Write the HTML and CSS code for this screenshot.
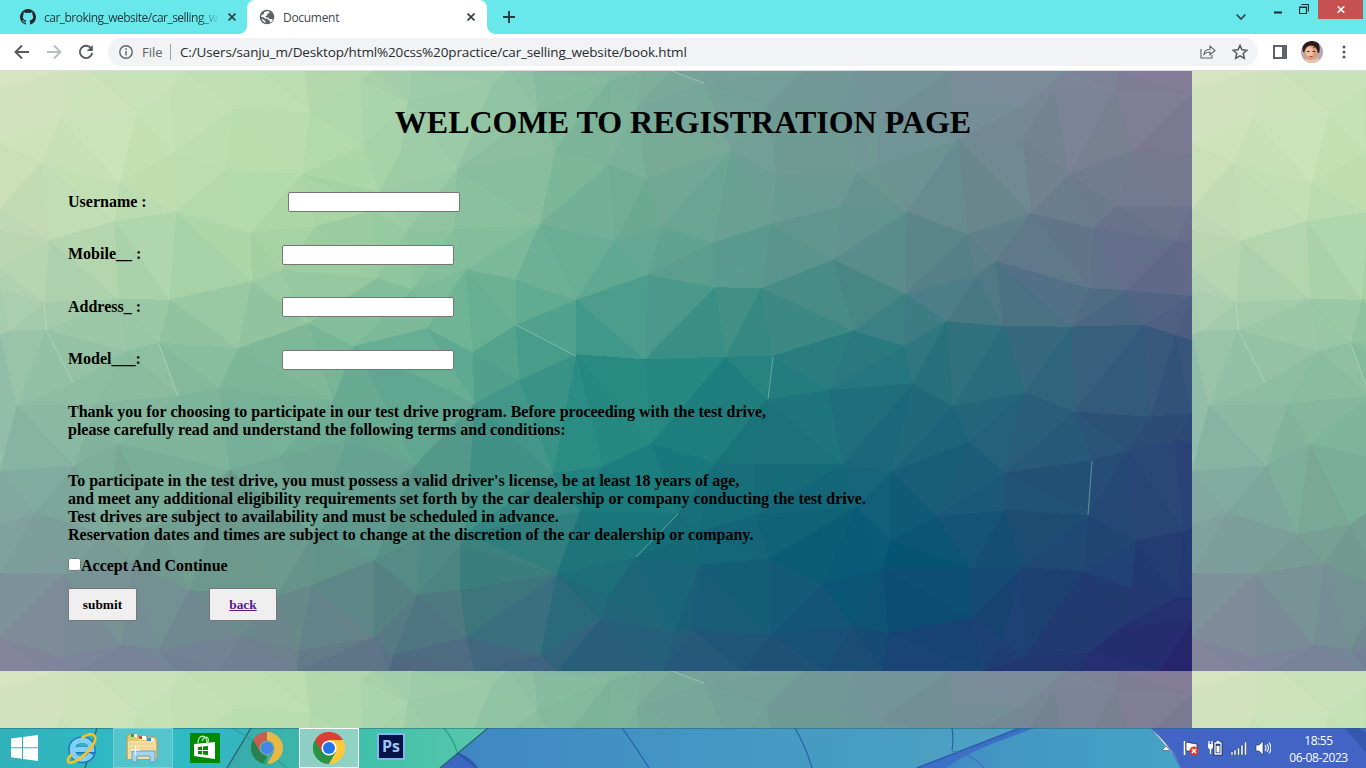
FILE: index.html
```
<!DOCTYPE html>
<html lang="en">
<head>
<meta charset="utf-8">
<title>Document</title>
<link rel="stylesheet" href="styles.css">
</head>
<body>
<header class="tabs">
  <div class="tab tab-idle">
    <svg class="fav" viewBox="0 0 16 16"><path fill="#24292f" d="M8 0a8 8 0 0 0-2.5 15.6c.4.1.5-.2.5-.4v-1.5c-2.2.5-2.7-.9-2.7-.9-.4-.9-.9-1.200-.9-1.200-.7-.5.1-.5.1-.5.8.1 1.200.8 1.200.8.7 1.300 1.900.9 2.300.7.1-.5.3-.9.5-1.100-1.800-.2-3.600-.9-3.600-4 0-.9.300-1.600.8-2.100-.1-.2-.4-1 .1-2.100 0 0 .7-.2 2.200.8a7.600 7.600 0 0 1 4 0c1.500-1 2.200-.8 2.200-.8.4 1.100.2 1.900.1 2.100.5.6.8 1.300.8 2.100 0 3.100-1.900 3.800-3.700 4 .3.300.6.8.6 1.500v2.200c0 .2.1.5.5.4A8 8 0 0 0 8 0z"/></svg>
    <span class="tab-title fade">car_broking_website/car_selling_w</span>
    <svg class="close" viewBox="0 0 8 8"><path d="M.5.5l7 7M7.500.5l-7 7"/></svg>
  </div>
  <div class="tab tab-active">
    <svg class="fav globe" viewBox="0 0 16 16"><circle cx="8" cy="8" r="7.300" fill="#5f6368"/><path fill="#fff" d="M9 2.200l1.500.4-.3 1.600-1.700.5-.3 1.600-1.700.9.300 1.200h2.600l1 1.500 2.500.2 1 .9c-.6 1.300-1.500 2.200-2.700 2.800l-.5-2-1.600-1-.2-1-2.700-.1-1.500-1.400-2.500-.3c0-.9.200-1.800.6-2.500l1.400.3.8-1.300L5.300 3C6.400 2.300 7.700 2 9 2.200zM2.500 10l2 .4 1.600 1.700.6 1.600C4.700 13.200 3.200 11.900 2.500 10z"/></svg>
    <span class="tab-title">Document</span>
    <svg class="close" viewBox="0 0 8 8"><path d="M.5.5l7 7M7.500.5l-7 7"/></svg>
  </div>
  <svg class="plus" viewBox="0 0 12 12"><path d="M6 0v12M0 6h12"/></svg>
  <svg class="search-tabs" viewBox="0 0 10 6"><path d="M.7.7L5 5 9.300.7"/></svg>
  <div class="win">
    <svg class="min" viewBox="0 0 8 3"><path d="M0 1.500h8"/></svg>
    <svg class="restore" viewBox="0 0 10 10"><path d="M.5 3h7v6.500h-7zM.5 3.500h7M2.500.5h7v7"/></svg>
    <span class="win-close"><svg viewBox="0 0 8 7"><path d="M.7.3l6.600 6.400M7.300.3L.7 6.700"/></svg></span>
  </div>
</header>
<nav class="toolbar">
  <svg class="nav-i" viewBox="0 0 16 16"><path d="M15 8H2M8 1.500L1.500 8 8 14.500"/></svg>
  <svg class="nav-i dim" viewBox="0 0 16 16"><path d="M1 8h13M8 1.500L14.500 8 8 14.500"/></svg>
  <svg class="nav-i" viewBox="0 0 16 16"><path d="M13.300 4.500A6.200 6.200 0 1 0 14.200 9"/><path class="solid" d="M14.800 1v6h-6z"/></svg>
  <div class="omni">
    <svg class="info" viewBox="0 0 14 14"><circle cx="7" cy="7" r="6.200"/><path d="M7 6v4.500M7 3.300V5"/></svg>
    <span class="scheme">File</span><i class="sep"></i>
    <span class="url">C:/Users/sanju_m/Desktop/html%20css%20practice/car_selling_website/book.html</span>
    <svg class="share" viewBox="0 0 16 14"><path d="M1 4v9h11v-3M4 9.500c.3-3.300 2.300-5 6-5.200V1.200L15 5.500l-5 4.200V7c-2.800 0-4.500.8-6 2.500z"/></svg>
    <svg class="star" viewBox="0 0 14 14"><path d="M7 1.200l1.700 3.900 4.300.4-3.200 2.800 1 4.200L7 10.300l-3.800 2.200 1-4.200L1 5.500l4.300-.4z"/></svg>
  </div>
  <svg class="panel" viewBox="0 0 14 14"><path fill="#5f6368" fill-rule="evenodd" d="M0 0h14v14H0zM2 2v10h7V2z"/></svg>
  <svg class="avatar" viewBox="0 0 22 22">
    <defs><clipPath id="round"><circle cx="11" cy="11" r="11"/></clipPath></defs>
    <g clip-path="url(#round)"><path fill="#b8a7b8" d="M0 0h22v22H0z"/><path fill="#2c1b1c" d="M2 11C0 5 4 0 11 0s9 5 7 12z"/><ellipse cx="10" cy="12" rx="6.800" ry="7.500" fill="#d99c7c"/><ellipse cx="8.500" cy="11" rx="4" ry="5" fill="#ecc0a2"/><path fill="#2c1b1c" d="M3 9c1-3 3-5 6-5s8 2 9 7V3L11 0 4 2z"/><path fill="#e8c5aa" d="M4 18l6 1 7-2 4 5H1z"/><path stroke="#402020" d="M6 10.500h2.500M11.500 10.500H14"/><path stroke="#a84545" d="M8.500 15.500h3"/><circle cx="13" cy="6.500" r=".8" fill="#a22"/></g>
  </svg>
  <svg class="kebab" viewBox="0 0 4 14"><circle cx="2" cy="2" r="1.500"/><circle cx="2" cy="7" r="1.500"/><circle cx="2" cy="12" r="1.500"/></svg>
</nav>
<main class="page">
  <svg class="mesh" viewBox="0 0 1366 657"><g id="tile"></g><use href="#tile" x="1192"/><use href="#tile" y="600"/><use href="#tile" x="1192" y="600"/></svg>
  <div class="content">
    <h1>WELCOME TO REGISTRATION PAGE</h1>
    <form class="form">
      <label class="row first"><span>Username :</span><input type="text"></label>
      <label class="row"><span>Mobile__ :</span><input type="text"></label>
      <label class="row"><span>Address_ :</span><input type="text"></label>
      <label class="row"><span>Model___:</span><input type="text"></label>
      <p class="intro">Thank you for choosing to participate in our test drive program. Before proceeding with the test drive,<br>please carefully read and understand the following terms and conditions:</p>
      <p class="terms">To participate in the test drive, you must possess a valid driver's license, be at least 18 years of age,<br>and meet any additional eligibility requirements set forth by the car dealership or company conducting the test drive.<br>Test drives are subject to availability and must be scheduled in advance.<br>Reservation dates and times are subject to change at the discretion of the car dealership or company.</p>
      <label class="accept"><input type="checkbox"><span>Accept And Continue</span></label>
      <div class="actions"><button type="button">submit</button><button type="button" class="back"><a href="#">back</a></button></div>
    </form>
  </div>
</main>
<footer class="taskbar">
  <svg class="wall" viewBox="0 0 1366 40" preserveAspectRatio="none">
    <defs>
      <linearGradient id="w1"><stop offset="0" stop-color="#31b1ba"/><stop offset=".6" stop-color="#2fbcc6"/><stop offset="1" stop-color="#35b3bd"/></linearGradient>
      <linearGradient id="w2"><stop offset="0" stop-color="#38a9ac"/><stop offset=".5" stop-color="#3fc0aa"/><stop offset="1" stop-color="#58c7aa"/></linearGradient>
      <linearGradient id="w3"><stop offset="0" stop-color="#3f86c5"/><stop offset=".5" stop-color="#4498c3"/><stop offset="1" stop-color="#4da2c3"/></linearGradient>
      <linearGradient id="w4"><stop offset="0" stop-color="#3c80c7"/><stop offset=".3" stop-color="#4496c3"/><stop offset="1" stop-color="#45a4c5"/></linearGradient>
    </defs>
    <path fill="url(#w1)" d="M0 0h260v40H0z"/><path fill="url(#w2)" d="M250 0h238l-48 40H227z"/>
    <path fill="url(#w3)" d="M488 0h530l-100 40H440z"/><path fill="#3b66c2" d="M458 25l-18 15h38c-3-6-9-12-20-15z"/>
    <path fill="url(#w4)" d="M1018 0h133l34 40H918z"/><path fill="#3a70c5" d="M1034 0h-16L916 40h30c20-15 40-22 88-40z"/>
    <path fill="#4164c5" d="M1151 0h215v40h-185c-5-15-15-26-30-40z"/><path fill="#3557ae" d="M1345 0l21 25V5l-8-5z"/>
    <g fill="none" stroke="#2860ab" stroke-width="1.200"><path d="M622 0c10 14 18 26 27 40M795 0c8 14 13 26 17 40M952 0c1.500 10 1.500 14 0 22"/><path stroke="#2b5a9a" stroke-width="2.200" d="M457 25c9 5 15 10 20 15"/><path stroke="#2a6472" stroke-width="1.300" d="M97 0L85 40M251 0l-24 40M488 0l-48 40"/><path stroke="#2a9e94" d="M232 0c20 10 35 24 55 40M444 0q10 12 13 24"/><path stroke="#2f5fae" stroke-width="1.600" d="M1020 0L917 40"/><path stroke="#5267bd" d="M952 23q22 4 32 17M1151 0q18 14 30 40"/></g>
    <path stroke="#24616d" stroke-opacity=".5" d="M0 .5h1366"/>
  </svg>
  <div class="apps">
    <span class="app start"><svg viewBox="0 0 27 26"><path fill="#fff" d="M0 3.500L11 2v10.300H0zM12 1.900L27 0v12.300H12zM0 13.300h11v10.500L0 22.300zM12 13.300h15V26l-15-2z"/></svg></span>
    <span class="app ie"><svg viewBox="0 0 32 32"><path fill="none" stroke="#1d74b8" stroke-width="7.400" d="M27 21c-2 4.500-5.500 6.500-10 6.500-6 0-11-4.500-11-10.500S11 7 17 7s9.500 4.500 10 10.500H9"/><path fill="none" stroke="#7fd0f4" stroke-width="5.400" d="M26 21.500c-2 4-5 5.500-9 5.500-6 0-10.500-4-10.500-10S11 7.500 17 7.500s9 4 9.500 9.500H9"/><path fill="none" stroke="#f4c32b" stroke-width="2.800" d="M6 22C-1 29 2 33 10 29 21 23 34 8 29 2.500 27 .5 22 1.500 16 5"/></svg></span>
    <span class="app frame"><svg viewBox="0 0 34 30"><path fill="#e4c873" stroke="#b49b55" d="M1 4l2-3h7l2 3h18l1 3v19H1z"/><path fill="#fff" d="M5 1h6v3H5zM13 3h7v4h-7zM21 5h7v3h-7z"/><path fill="#2aa43b" d="M5 1h3v3H5z"/><path fill="#dc4931" d="M13 3h3v3h-3z"/><path fill="#4589ce" d="M21 5h4v3h-4z"/><path fill="#f3dda0" d="M2 8h28v18H2z"/><path stroke="#e3cb87" stroke-width=".7" d="M3 11h26M3 15h26M3 19h26"/><path fill="#a6d4ec" stroke="#679dc3" d="M6 29V18h23v11h-5v-6H11v6z"/><path stroke="#fff" d="M5 17h9M9.500 12v10"/></svg></span>
    <span class="app store"><svg viewBox="0 0 30 30"><path fill="#008a00" d="M0 0h30v30H0z"/><path fill="none" stroke="#b9e5b9" stroke-width="1.300" d="M8 10c0-9 9-9 9 0M12 8c3-7 8-3 6 1"/><path fill="#fff" d="M4 11l21-2v17L4 23z"/><path fill="#008a00" d="M8 14l4-.4V17H8zM13 13.500l5-.5v4h-5zM8 18h4v3.500L8 21zM13 18h5v4l-5-.4z"/></svg></span>
    <span class="app"><svg class="chrome" viewBox="0 0 32 32"><path fill="#34a35c" d="M16 16L2.100 8A16 16 0 0 0 16 32z"/><path fill="#c95e4e" d="M2.100 8A16 16 0 0 1 16 0v8l-7 12z"/><path fill="#e8b943" d="M16 0A16 16 0 0 1 16 32l7-12-7-12z"/><path fill="#278251" d="M2.100 8L9 20l7 4-4 7.500A16 16 0 0 1 2.100 8z"/><circle cx="16" cy="16" r="7.600" fill="#73a5a0"/><circle cx="16" cy="16" r="6" fill="#4287e6"/></svg></span>
    <span class="app frame current"><svg class="chrome" viewBox="0 0 32 32"><path fill="#299247" d="M16 16L2.100 8A16 16 0 0 0 16 32l7-12z"/><path fill="#dc3f32" d="M2.100 8A16 16 0 0 1 29.900 8H16l-7 12z"/><path fill="#fcc934" d="M29.900 8A16 16 0 0 1 16 32l7-12-7-12z"/><circle cx="16" cy="16" r="7.600" fill="#fff"/><circle cx="16" cy="16" r="6" fill="#2374e8"/></svg></span>
    <span class="app ps"><b>Ps</b></span>
  </div>
  <div class="tray">
    <svg class="t-up" viewBox="0 0 8 5"><path fill="#fff" stroke="#234" stroke-width=".5" d="M0 4.500L4 0l4 4.500z"/></svg>
    <svg class="t-flag" viewBox="0 0 16 16"><path stroke="#fff" stroke-width="1.500" d="M1.500 1v14"/><path fill="#fff" stroke="#123" stroke-width=".7" d="M3 2l5 1 6 1v7H3z"/><circle cx="11" cy="11" r="4.500" fill="#df3d2c"/><path stroke="#fff" stroke-width="1.500" d="M9 9l4 4M13 9l-4 4"/></svg>
    <svg class="t-bat" viewBox="0 0 16 16"><path fill="none" stroke="#142b55" stroke-width="3" d="M8 3h6v11H8z"/><path fill="none" stroke="#fff" stroke-width="1.300" d="M8 3h6v11H8zM9.500 1.700h3M2 1v4M5 1v4M3.500 7v7"/><path fill="#fff" d="M1 4h5v3L5 9H2L1 7zM9.500 6h3v6.500h-3z"/></svg>
    <svg class="t-sig" viewBox="0 0 16 13"><g fill="#fff" stroke="#142b55" stroke-width=".4"><path d="M0 10h2v3H0zM3 8h2v5H3zM6.500 6h2v7h-2zM10 3h2v10h-2zM13.500 0h2v13h-2z"/></g></svg>
    <svg class="t-vol" viewBox="0 0 16 16"><path fill="#fff" stroke="#142b55" stroke-width=".6" d="M1 5h3l4-4v14l-4-4H1z"/><path fill="none" stroke="#e9f0ff" stroke-width="1.200" d="M10 5q2 3 0 6M12 4q3 4 0 8M14 2.500q4 5.500 0 11"/></svg>
    <div class="clock"><span>18:55</span><span>06-08-2023</span></div>
  </div>
</footer>
<script src="mesh.js"></script>
</body>
</html>
```
FILE: styles.css
```
* { box-sizing: border-box; }
body { margin: 0; width: 1366px; height: 768px; overflow: hidden; display: flex; flex-direction: column; font-family: "Open Sans", "Noto Sans", sans-serif; }
svg { display: block; flex: none; }
.tabs { height: 34px; background: #69e8ec; display: flex; align-items: center; }
.tab { display: flex; align-items: center; height: 34px; font-size: 12px; color: #24383c; }
.tab-idle { width: 247px; padding-left: 20px; }
.tab-active { position: relative; width: 240px; padding-left: 12px; background: #fff; border-radius: 8px 8px 0 0; color: #45484c; }
.tab-active::before, .tab-active::after { content: ""; position: absolute; bottom: 0; width: 8px; height: 8px; }
.tab-active::before { left: -8px; background: radial-gradient(circle at 0 0, transparent 7.500px, #fff 8px); }
.tab-active::after { right: -8px; background: radial-gradient(circle at 100% 0, transparent 7.500px, #fff 8px); }
.fav { width: 16px; height: 16px; margin-right: 8px; }
.tab-title { width: 176px; white-space: nowrap; }
.fade { letter-spacing: -.52px; -webkit-mask-image: linear-gradient(90deg, #000 154px, transparent 176px); }
.tab-active .tab-title { width: 184px; letter-spacing: -.3px; }
.close { width: 8px; height: 8px; margin-left: 8px; fill: none; stroke: #303b3e; stroke-width: 1.600; }
.tab-active .close { margin-left: 0; }
.plus { width: 12px; height: 12px; margin-left: 16px; stroke: #253c40; stroke-width: 1.900; }
.search-tabs { width: 10px; height: 6px; margin-left: 721px; fill: none; stroke: #28474a; stroke-width: 1.700; }
.win { display: flex; height: 34px; margin-left: 28px; flex: 1; }
.win svg { fill: none; stroke: #20282a; }
.min { width: 8px; height: 3px; margin-top: 11px; stroke-width: 2; }
.restore { width: 10px; height: 10px; margin: 4px 9px 0 17px; stroke-width: 1.200; }
.win-close { width: 45px; height: 19px; background: #c75050; display: flex; align-items: center; justify-content: center; }
.win-close svg { width: 8px; height: 7px; stroke: #fff; stroke-width: 1.600; }
.toolbar { height: 37px; background: #fff; border-bottom: 1px solid #dadce0; display: flex; align-items: center; padding-left: 14px; }
.nav-i { width: 16px; height: 16px; margin-right: 16px; fill: none; stroke: #55585d; stroke-width: 1.900; }
.nav-i .solid { fill: #55585d; stroke: none; }
.dim { stroke: #babcbe; }
.omni { width: 1150px; height: 28px; margin-left: -2px; border-radius: 14px; background: #f1f3f4; display: flex; align-items: center; padding-left: 11px; font-size: 14px; color: #292c30; }
.info { width: 14px; height: 14px; fill: none; stroke: #5f6368; stroke-width: 1.400; }
.scheme { width: 28px; margin-left: 9px; color: #5f6368; font-size: 13px; }
.sep { width: 1px; height: 16px; background: #9da0a4; }
.url { width: 1020px; margin-left: 9px; font-size: 13.500px; letter-spacing: -.14px; white-space: nowrap; }
.share { width: 16px; height: 14px; fill: none; stroke: #5f6368; stroke-width: 1.100; }
.star { width: 16px; height: 16px; margin-left: 16px; fill: none; stroke: #55585d; stroke-width: 1.300; }
.panel { width: 14px; height: 14px; margin-left: 15px; }
.avatar { width: 22px; height: 22px; margin-left: 14px; }
.kebab { width: 4px; height: 14px; margin-left: 19px; fill: #55585d; }
.page { position: relative; height: 657px; overflow: hidden; background: #70a898; font-family: "Liberation Serif", serif; font-weight: bold; color: #000; }
.mesh { position: absolute; inset: 0; width: 1366px; height: 657px; }
.content { position: relative; padding-top: 33px; }
h1 { margin: 0; height: 37px; font-size: 32px; line-height: 37px; text-align: center; }
.form { padding: 34.300px 0 0 68px; font-size: 16px; line-height: 18px; }
.row { display: flex; align-items: center; height: 52.600px; }
.row span { width: 214px; }
.row.first span { width: 220px; }
.row input { width: 172px; height: 20px; margin: 1px 0 0; padding: 0; background: #fff; border: 1px solid #767676; border-radius: 2px; }
p { margin: 0; }
.intro { padding-top: 17.700px; }
.terms { padding-top: 33px; }
.accept { display: flex; height: 18px; margin-top: 13px; }
.accept input { width: 13px; height: 13px; margin: 1px 0 0; }
.actions { display: flex; gap: 72px; margin-top: 13px; }
button { width: 69px; height: 33px; padding: 0; border: 1px solid #767676; border-radius: 2px; background: #efefef; color: #000; font: bold 13.330px "Liberation Serif", serif; }
.back { width: 68px; }
.back a { color: #551a8b; }
.taskbar { position: relative; height: 40px; display: flex; justify-content: space-between; overflow: hidden; }
.wall { position: absolute; inset: 0; width: 1366px; height: 40px; }
.apps { position: relative; display: flex; align-items: center; }
.app { width: 62px; height: 40px; display: flex; align-items: center; justify-content: center; }
.start { width: 50px; }
.start svg { width: 27px; height: 26px; margin-left: -1px; }
.ie svg { width: 31px; height: 31px; }
.frame { width: 60px; border: 1px solid #7ccdd5; background: rgba(145, 212, 217, .38); margin-left: 1px; }
.frame svg { width: 34px; height: 30px; }
.store { padding-left: 2px; }
.store svg { width: 30px; height: 30px; }
.app .chrome { width: 32px; height: 32px; }
.store + .app { padding-left: 2px; }
.current { margin-left: 2px; border-color: #fff; background: rgba(218, 229, 219, .52); }
.ps b { width: 28px; height: 27px; margin: -3px 0 0 2px; border: 2px solid #83b6ef; background: #071348; color: #9ec5f4; font-size: 16px; line-height: 22px; text-align: center; }
.tray { position: relative; display: flex; align-items: center; color: #fff; }
.t-up { width: 8px; height: 5px; margin-right: 13px; }
.t-flag, .t-bat, .t-sig, .t-vol { width: 16px; height: 16px; margin-right: 8px; }
.t-sig { height: 13px; }
.clock { width: 95px; display: flex; flex-direction: column; align-items: center; font-size: 12px; line-height: 17px; letter-spacing: -.4px; padding-top: 1px; margin-left: -8px; }
```
FILE: mesh.js
```
// Low-poly backdrop: vertices per quadrant, in that quadrant's own units.
const quads = [
  { sx: 2.613, oy: -1, ox: 0, p: "0,3 0,55 155,3 235,3 158,145 357,128 445,50 480,3 345,3 687,3 606,117 795,3 810,127 942,30 975,3 0,218 107,277 313,339 452,250 590,299 790,311 948,225 1047,245 1065,95 1077,3 1288,37 1325,3 1405,120 1392,3 1195,299 1452,238 990,365 460,426 300,453 130,510 0,415 0,481 0,595 655,487 827,468 975,422 1062,482 1185,478 1410,463 115,696 0,657 308,687 443,689 658,634 733,602 985,624 1078,658 1217,598 1347,628 1505,690 805,760 120,780 28,783 0,792 330,842 415,818 622,835 925,828 1115,775 1235,847 1347,765 1506,853" },
  { sx: 2.047, oy: -1, ox: 600, p: "20,30 85,3 148,3 212,38 75,113 268,240 95,326 18,283 342,110 415,3 490,110 525,3 570,150 360,315 525,309 567,290 733,207 720,120 715,3 865,207 870,105 930,60 955,3 1055,62 1062,3 1212,3 1212,73 1093,240 1212,250 960,312 1057,408 882,430 628,425 495,407 350,462 232,518 127,470 30,512 98,614 235,652 330,654 478,569 752,492 810,573 770,618 625,672 1010,474 1178,514 1212,410 1212,510 1002,655 1078,661 1212,678 518,782 622,827 710,754 825,768 965,770 1113,764 1178,795 1212,810 353,858 257,860 92,868" },
  { sx: 2.613, oy: 299, ox: 0, p: "190,40 43,108 250,100 465,77 572,55 195,287 308,220 0,302 92,427 0,465 275,492 415,463 730,260 600,300 870,90 905,210 1085,285 1357,30 1240,100 1445,310 1515,425 1215,490 1100,500 0,608 166,612 345,578 820,490 978,570 815,645 720,680 495,660 1203,525 1090,672 1203,660 1455,612 166,862 0,804 318,825 415,838 630,798 780,842 978,802 1028,855 1218,802 1412,858 1568,750 0,903 120,903 205,903 455,903 570,903 775,903 1018,903 1240,903 1455,903" },
  { sx: 2.047, oy: 299, ox: 600, p: "340,88 467,60 640,40 723,108 870,67 970,125 1127,140 1212,130 105,220 5,290 235,280 318,282 497,283 597,305 755,215 827,308 1080,240 1175,213 1212,216 1008,270 1000,435 828,421 688,440 595,510 525,410 318,435 160,432 200,485 75,562 203,585 345,565 455,643 578,594 762,594 866,591 990,604 1097,512 1195,483 1212,473 1178,683 1087,655 1212,685 1070,768 1212,752 1003,847 825,807 762,744 590,788 515,768 350,795 190,780 152,788 5,745 15,680 130,903 290,903 462,903 578,903 785,903 868,865 983,903 1145,903 1212,903" }
];
const pts = quads.flatMap(q => q.p.split(" ").map(s => {
  const [x, y] = s.split(",").map(Number);
  return [Math.min(1192, q.ox + x / q.sx), y / 3 + q.oy];
}));
const n = pts.length;
pts.push([-9000, -8000], [9500, -7500], [400, 12000]);

function circle(t) {
  const [[ax, ay], [bx, by], [cx, cy]] = t.map(i => pts[i]);
  const d = 2 * (ax * (by - cy) + bx * (cy - ay) + cx * (ay - by));
  const a = ax * ax + ay * ay, b = bx * bx + by * by, c = cx * cx + cy * cy;
  const x = (a * (by - cy) + b * (cy - ay) + c * (ay - by)) / d;
  const y = (a * (cx - bx) + b * (ax - cx) + c * (bx - ax)) / d;
  return { t, x, y, r: (ax - x) ** 2 + (ay - y) ** 2 };
}
let tris = [circle([n, n + 1, n + 2])];
for (let i = 0; i < n; i++) {
  const edges = new Map();
  tris = tris.filter(c => {
    if ((pts[i][0] - c.x) ** 2 + (pts[i][1] - c.y) ** 2 >= c.r - 1e-6) return true;
    for (let k = 0; k < 3; k++) {
      const e = [c.t[k], c.t[(k + 1) % 3]].sort((u, v) => u - v), key = e.join();
      edges.has(key) ? edges.delete(key) : edges.set(key, e);
    }
    return false;
  });
  edges.forEach(e => tris.push(circle([...e, i])));
}

// Colour field: nine columns by seven rows across the 1192 x 600 tile.
const field = [
  "d9e4c4 c8e2b9 bcddb1 9ccba9 82b79e 769f99 75939a 7c8899 867a98",
  "cde1ba c3e1b3 b4dcaa 99c9a4 79b498 6fa194 6d9592 70838f 787890",
  "b6d5b1 a9d2aa a2cfa2 82bf9b 62a992 57998d 538888 5b7588 626688",
  "98c3aa 8abd9f 78b597 5ea890 2e9084 24837f 24747c 2d667b 365279",
  "86aea2 7ab099 70aa96 55988a 1c8480 176f79 17637a 245676 2b4276",
  "7d999b 73978f 669389 4a847f 1c7179 115f77 015575 1b4772 243973",
  "86819d 75819a 6a7a8c 4c6580 2d5c7a 235177 1b4675 223570 28216c"
].map(r => r.split(" ").map(h => [0, 2, 4].map(k => parseInt(h.substr(k, 2), 16))));
function shade(x, y, j) {
  const u = Math.min(7.999, Math.max(0, x / 149)), v = Math.min(5.999, Math.max(0, y / 100));
  const i = u | 0, k = v | 0, a = u - i, b = v - k;
  return "rgb(" + [0, 1, 2].map(c => Math.round(
    (field[k][i][c] * (1 - a) + field[k][i + 1][c] * a) * (1 - b) +
    (field[k + 1][i][c] * (1 - a) + field[k + 1][i + 1][c] * a) * b + j)).join() + ")";
}
let out = '<rect width="1192" height="600" fill="#70a898"/>';
tris.filter(c => c.t.every(i => i < n)).forEach(c => {
  const p = c.t.map(i => pts[i]);
  const x = (p[0][0] + p[1][0] + p[2][0]) / 3, y = (p[0][1] + p[1][1] + p[2][1]) / 3;
  const f = shade(x, y, ((Math.round(x * 7 + y * 13) % 9) - 4) * 0.35);
  out += `<path shape-rendering="crispEdges" d="M${p.map(q => q.map(w => w.toFixed(1)).join(" ")).join("L")}Z" fill="${f}"/>`;
});
out += '<path fill="none" stroke="#c9e6d6" stroke-opacity=".6" stroke-width=".7" d="M44 232l2 27 27 53M159 273l19 52M516 254l60 31M773 286l-5 42M672 0l32 12M1092 390l-4 54M678 443l-42 43"/>';
document.getElementById("tile").innerHTML =
  '<clipPath id="edge"><rect width="1192" height="600"/></clipPath><g clip-path="url(#edge)">' + out + "</g>";
```
